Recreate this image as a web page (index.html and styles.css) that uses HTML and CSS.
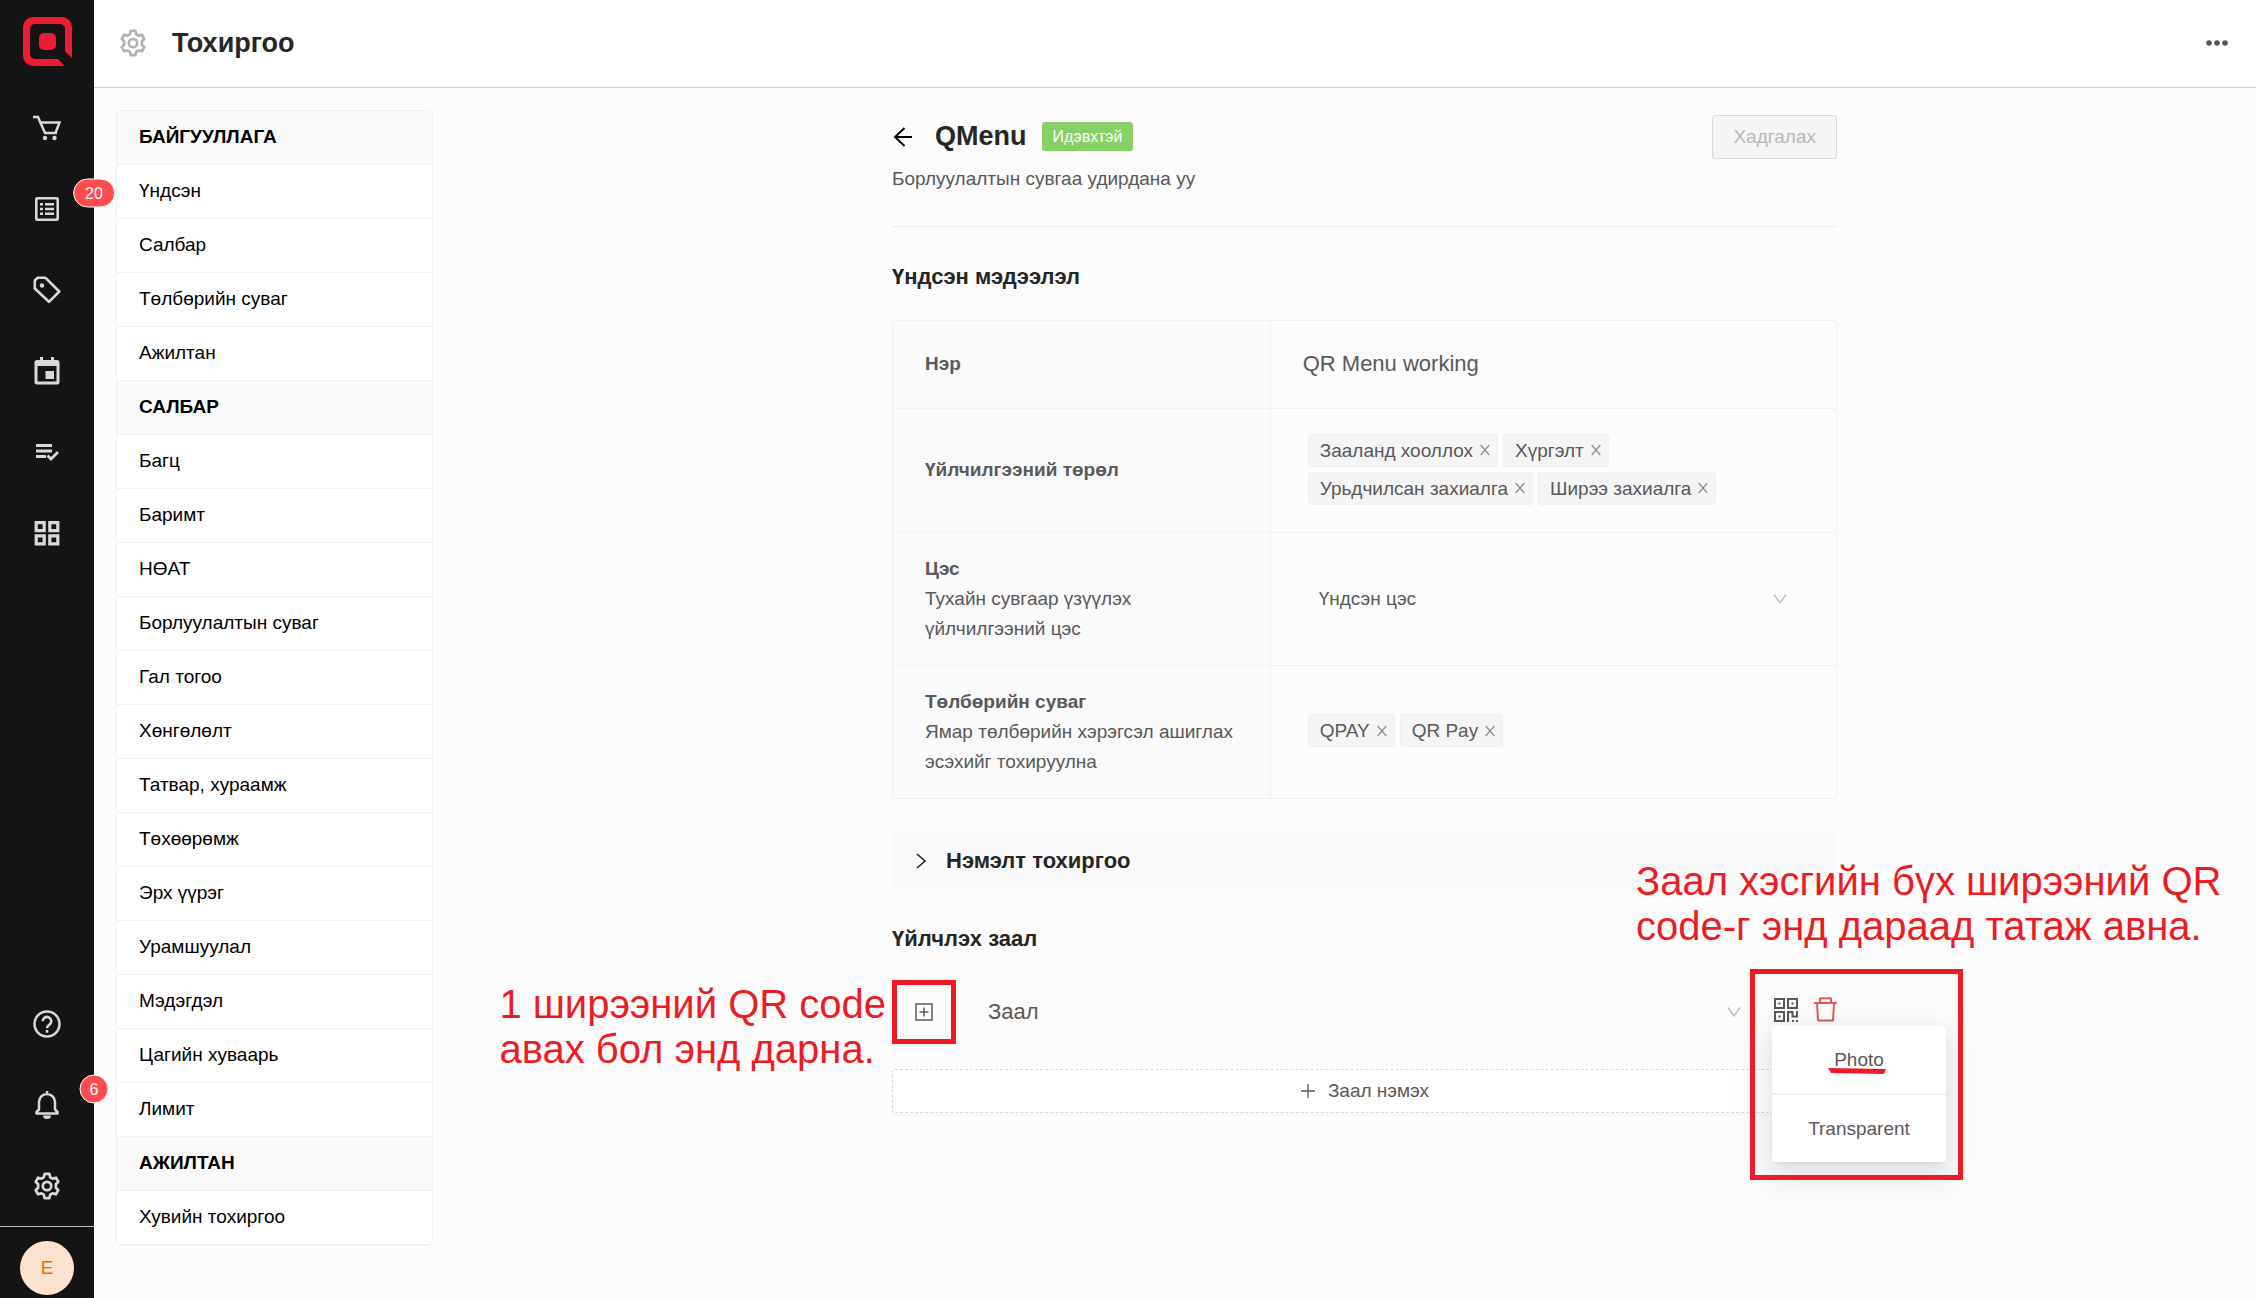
FILE: index.html
```html
<!DOCTYPE html>
<html lang="mn">
<head>
    <meta charset="UTF-8">
    <meta name="viewport" content="width=device-width, initial-scale=1.0">
    <title>Тохиргоо</title>
    <link rel="stylesheet" href="styles.css">
</head>
<body>
    <!-- shared icon shapes -->
    <svg class="defs" width="0" height="0">
        <symbol id="gear" viewBox="0 0 24 24">
            <path d="M10 1.6h4l.8 3 1.9 1.1 3-.8 2 3.500-2.100 2.100v3l2.100 2.100-2 3.500-3-.8-1.900 1.100-.8 3h-4l-.8-3-1.900-1.100-3 .8-2-3.500 2.100-2.100v-3L2.300 8.400l2-3.500 3 .8 1.900-1.100z" fill="none" stroke="currentColor" stroke-width="2.300" stroke-linejoin="round"/>
            <circle cx="12" cy="12" r="3.600" fill="none" stroke="currentColor" stroke-width="2.300"/>
        </symbol>
        <symbol id="close" viewBox="0 0 10 12">
            <path d="M.7 1l8.600 10M9.300 1L.7 11" fill="none" stroke="currentColor" stroke-width="1.200"/>
        </symbol>
        <symbol id="down" viewBox="0 0 14 12">
            <path d="M1 1.500l6 8.500 6-8.500" fill="none" stroke="currentColor" stroke-width="1.400"/>
        </symbol>
    </svg>

    <div class="layout">
        <nav class="sidebar">
            <a href="#" class="logo" aria-label="QMenu">
                <svg width="49" height="49" viewBox="0 0 49 49">
                    <path d="M10 0h29a10 10 0 0 1 10 10v31l-7-6.500V12a5 5 0 0 0-5-5H12a5 5 0 0 0-5 5v25a5 5 0 0 0 5 5h23l6.500 7H10A10 10 0 0 1 0 39V10A10 10 0 0 1 10 0z" fill="#ed1b34"/>
                    <rect x="16" y="16" width="17" height="17" rx="5" fill="#ed1b34"/>
                </svg>
            </a>
            <a href="#" class="nav-item" aria-label="Захиалга">
                <svg width="28" height="28" viewBox="0 0 28 28">
                    <path d="M0 3h5l7 16h12" fill="none" stroke="currentColor" stroke-width="2.500"/>
                    <path d="M6.500 8.500h20l-4 10.500" fill="none" stroke="currentColor" stroke-width="2.500"/>
                    <circle cx="12" cy="24" r="2.200" fill="currentColor"/>
                    <circle cx="21.500" cy="24" r="2.200" fill="currentColor"/>
                </svg>
            </a>
            <a href="#" class="nav-item" aria-label="Жагсаалт">
                <svg width="26" height="26" viewBox="0 0 26 26">
                    <rect x="2.300" y="2.300" width="21.400" height="21.400" rx="1" fill="none" stroke="currentColor" stroke-width="2.600"/>
                    <path d="M6 8.200h3M11 8.200h9M6 13h3M11 13h9M6 17.800h3M11 17.800h9" stroke="currentColor" stroke-width="2.600"/>
                </svg>
                <span class="badge">20</span>
            </a>
            <a href="#" class="nav-item" aria-label="Бараа">
                <svg width="28" height="28" viewBox="0 0 28 28">
                    <path d="M4.500 1.800h8L26.300 15.500 16 25.800 1.800 12.500v-8z" fill="none" stroke="currentColor" stroke-width="2.600" stroke-linejoin="round"/>
                    <circle cx="9" cy="9.500" r="2.200" fill="currentColor"/>
                </svg>
            </a>
            <a href="#" class="nav-item" aria-label="Календарь">
                <svg width="26" height="28" viewBox="0 0 26 28">
                    <path d="M3 3h20a2.500 2.500 0 0 1 2.500 2.500V25a2.500 2.500 0 0 1-2.500 2.500H3A2.500 2.500 0 0 1 .5 25V5.500A2.500 2.500 0 0 1 3 3zM3.500 9v15.500h19V9z" fill="currentColor" fill-rule="evenodd"/>
                    <path d="M6 0h3v4H6zM17 0h3v4h-3zM11.500 14h8.500v8h-8.500z" fill="currentColor"/>
                </svg>
            </a>
            <a href="#" class="nav-item" aria-label="Даалгавар">
                <svg width="24" height="18" viewBox="0 0 24 18">
                    <path d="M1 2.500h16M1 8h16M1 13.500h10" stroke="currentColor" stroke-width="2.800"/>
                    <path d="M12.500 12.500l3.500 3.500 7-7" fill="none" stroke="currentColor" stroke-width="2.800"/>
                </svg>
            </a>
            <a href="#" class="nav-item" aria-label="Цэс">
                <svg width="26" height="26" viewBox="0 0 26 26">
                    <path d="M2.200 2.700h8v8h-8zM15.800 2.700h8v8h-8zM2.200 15.800h8v8h-8zM15.800 15.800h8v8h-8z" fill="none" stroke="currentColor" stroke-width="3.200"/>
                </svg>
            </a>

            <div class="nav-bottom">
                <a href="#" class="nav-item" aria-label="Тусламж">
                    <svg width="28" height="28" viewBox="0 0 28 28">
                        <circle cx="14" cy="14" r="12.500" fill="none" stroke="currentColor" stroke-width="2.500"/>
                        <path d="M9.800 11.200a4.200 4.200 0 1 1 6.800 3.200c-1.600 1.300-2.600 1.900-2.600 3.800M14 20v2.800" fill="none" stroke="currentColor" stroke-width="2.500"/>
                    </svg>
                </a>
                <a href="#" class="nav-item" aria-label="Мэдэгдэл">
                    <svg width="26" height="28" viewBox="0 0 26 28">
                        <path d="M2.500 22.500h21v-1.500l-2.500-2.500V11a8 8 0 0 0-16 0v7.500L2.500 21zM13 3V0" fill="none" stroke="currentColor" stroke-width="2.500" stroke-linejoin="round"/>
                        <path d="M9 24.500h8a4 3.500 0 0 1-8 0z" fill="currentColor"/>
                    </svg>
                    <span class="badge">6</span>
                </a>
                <a href="#" class="nav-item" aria-label="Тохиргоо">
                    <svg width="28" height="28"><use href="#gear"/></svg>
                </a>
                <div class="user">
                    <button type="button" class="avatar">E</button>
                </div>
            </div>
        </nav>

        <div class="page">
            <header class="header">
                <svg class="header-icon" width="28" height="28"><use href="#gear"/></svg>
                <h1>Тохиргоо</h1>
                <button type="button" class="more" aria-label="Бусад">
                    <svg width="22" height="6" viewBox="0 0 22 6" fill="currentColor">
                        <circle cx="3" cy="3" r="2.800"/>
                        <circle cx="11" cy="3" r="2.800"/>
                        <circle cx="19" cy="3" r="2.800"/>
                    </svg>
                </button>
            </header>

            <div class="body">
                <aside class="menu">
                    <h2>БАЙГУУЛЛАГА</h2>
                    <a href="#">Үндсэн</a>
                    <a href="#">Салбар</a>
                    <a href="#">Төлбөрийн суваг</a>
                    <a href="#">Ажилтан</a>
                    <h2>САЛБАР</h2>
                    <a href="#">Багц</a>
                    <a href="#">Баримт</a>
                    <a href="#">НӨАТ</a>
                    <a href="#">Борлуулалтын суваг</a>
                    <a href="#">Гал тогоо</a>
                    <a href="#">Хөнгөлөлт</a>
                    <a href="#">Татвар, хураамж</a>
                    <a href="#">Төхөөрөмж</a>
                    <a href="#">Эрх үүрэг</a>
                    <a href="#">Урамшуулал</a>
                    <a href="#">Мэдэгдэл</a>
                    <a href="#">Цагийн хуваарь</a>
                    <a href="#">Лимит</a>
                    <h2>АЖИЛТАН</h2>
                    <a href="#">Хувийн тохиргоо</a>
                </aside>

                <main class="content">
                    <div class="detail">
                        <div class="detail-header">
                            <div class="detail-title">
                                <a href="#" class="back" aria-label="Буцах">
                                    <svg width="22" height="22" viewBox="0 0 22 22">
                                        <path d="M20 11H3M12.500 2L3 11l9.500 9" fill="none" stroke="currentColor" stroke-width="1.900"/>
                                    </svg>
                                </a>
                                <h2>QMenu</h2>
                                <span class="status">Идэвхтэй</span>
                            </div>
                            <button type="button" class="save" disabled>Хадгалах</button>
                        </div>
                        <p class="subtitle">Борлуулалтын сувгаа удирдана уу</p>

                        <h3>Үндсэн мэдээлэл</h3>
                        <div class="info">
                            <table>
                                <tr>
                                    <th><label for="name">Нэр</label></th>
                                    <td><input type="text" id="name" value="QR Menu working"></td>
                                </tr>
                                <tr>
                                    <th>Үйлчилгээний төрөл</th>
                                    <td>
                                        <div class="tags">
                                            <span class="tag">Зааланд хооллох <button type="button" aria-label="Устгах"><svg width="10" height="12"><use href="#close"/></svg></button></span>
                                            <span class="tag">Хүргэлт <button type="button" aria-label="Устгах"><svg width="10" height="12"><use href="#close"/></svg></button></span>
                                            <span class="tag">Урьдчилсан захиалга <button type="button" aria-label="Устгах"><svg width="10" height="12"><use href="#close"/></svg></button></span>
                                            <span class="tag">Ширээ захиалга <button type="button" aria-label="Устгах"><svg width="10" height="12"><use href="#close"/></svg></button></span>
                                        </div>
                                    </td>
                                </tr>
                                <tr>
                                    <th><label for="menu">Цэс</label><p>Тухайн сувгаар үзүүлэх үйлчилгээний цэс</p></th>
                                    <td>
                                        <div class="select-wrap menu-select">
                                            <select id="menu">
                                                <option>Үндсэн цэс</option>
                                            </select>
                                            <svg width="14" height="12"><use href="#down"/></svg>
                                        </div>
                                    </td>
                                </tr>
                                <tr>
                                    <th>Төлбөрийн суваг<p>Ямар төлбөрийн хэрэгсэл ашиглах эсэхийг тохируулна</p></th>
                                    <td>
                                        <div class="tags">
                                            <span class="tag">QPAY <button type="button" aria-label="Устгах"><svg width="10" height="12"><use href="#close"/></svg></button></span>
                                            <span class="tag">QR Pay <button type="button" aria-label="Устгах"><svg width="10" height="12"><use href="#close"/></svg></button></span>
                                        </div>
                                    </td>
                                </tr>
                            </table>
                        </div>

                        <button type="button" class="collapse">
                            <svg width="12" height="16" viewBox="0 0 12 16">
                                <path d="M2 1l8 7-8 7" fill="none" stroke="currentColor" stroke-width="1.600"/>
                            </svg>
                            Нэмэлт тохиргоо
                        </button>

                        <h3 class="hall-title">Үйлчлэх заал</h3>
                        <div class="hall">
                            <div class="expand">
                                <button type="button" aria-label="Нээх">
                                    <svg width="18" height="18" viewBox="0 0 18 18">
                                        <path d="M1 1h16v16H1zM4.500 9h9M9 4.500v9" fill="none" stroke="currentColor" stroke-width="1.500"/>
                                    </svg>
                                </button>
                                <p class="note note-left">1 ширээний QR code<br>авах бол энд дарна.</p>
                            </div>
                            <div class="select-wrap hall-select">
                                <select aria-label="Заал">
                                    <option>Заал</option>
                                </select>
                                <svg width="14" height="12"><use href="#down"/></svg>
                            </div>
                            <div class="actions">
                                <button type="button" class="qr" aria-label="QR code">
                                    <svg width="24" height="24" viewBox="0 0 24 24">
                                        <path d="M1 1h9v9H1zM14 1h9v9h-9zM1 14h9v9H1z" fill="none" stroke="currentColor" stroke-width="2"/>
                                        <path d="M4.500 4.500h2v2h-2zM17.500 4.500h2v2h-2zM4.500 17.500h2v2h-2zM18 22h2v2h-2zM22 22h2v2h-2z" fill="currentColor"/>
                                        <path d="M14 24V14h4.500v4.500H23V13" fill="none" stroke="currentColor" stroke-width="2"/>
                                    </svg>
                                </button>
                                <button type="button" class="delete" aria-label="Устгах">
                                    <svg width="23" height="25" viewBox="0 0 23 25">
                                        <path d="M0 6h23M6 6V1.300h11V6M3 6l1 17.500h15L20 6" fill="none" stroke="currentColor" stroke-width="2" stroke-linejoin="round"/>
                                    </svg>
                                </button>

                                <div class="qr-menu">
                                    <button type="button">Photo
                                        <svg class="underline" width="58" height="6" viewBox="0 0 58 6">
                                            <path d="M0 0l58 1-2 5-53-1z" fill="#ed1c24"/>
                                        </svg>
                                    </button>
                                    <button type="button">Transparent</button>
                                </div>
                                <div class="frame"></div>
                                <p class="note note-right">Заал хэсгийн бүх ширээний QR<br>code-г энд дараад татаж авна.</p>
                            </div>
                        </div>

                        <button type="button" class="add">
                            <svg width="16" height="16" viewBox="0 0 16 16">
                                <path d="M8 1v14M1 8h14" stroke="currentColor" stroke-width="1.300"/>
                            </svg>
                            Заал нэмэх
                        </button>
                    </div>
                </main>
            </div>
        </div>
    </div>
</body>
</html>
```

FILE: styles.css
```css
* {
    box-sizing: border-box;
}
body {
    margin: 0;
    font-family: "Liberation Sans", Arial, sans-serif;
    font-size: 19px;
    line-height: 30px;
    color: #595959;
    background-color: #fcfcfc;
}
h1, h2, h3, p {
    margin: 0;
}
a {
    color: inherit;
    text-decoration: none;
}
button, input, select {
    font: inherit;
    color: inherit;
    background: none;
    border: none;
    padding: 0;
    margin: 0;
}
button {
    cursor: pointer;
}
svg {
    display: block;
    flex-shrink: 0;
}
.defs {
    position: absolute;
}
.layout {
    display: flex;
    min-height: 100vh;
}

/* sidebar */
.sidebar {
    position: sticky;
    top: 0;
    z-index: 2;
    display: flex;
    flex-direction: column;
    width: 94px;
    height: 100vh;
    flex-shrink: 0;
    background-color: #141414;
    color: #d9d9d9;
}
.logo {
    display: flex;
    justify-content: center;
    padding: 17px 0 21px;
}
.nav-item {
    position: relative;
    display: flex;
    align-items: center;
    justify-content: center;
    height: 81px;
}
.badge {
    position: absolute;
    top: 25px;
    left: 94px;
    transform: translate(-50%, -50%);
    min-width: 29px;
    height: 29px;
    padding: 0 11px;
    border: 1px solid #fff;
    border-radius: 15px;
    background-color: #ff4d4f;
    color: #fff;
    font-size: 16px;
    line-height: 27px;
    text-align: center;
}
.nav-bottom {
    margin-top: auto;
}
.nav-bottom .badge {
    padding: 0 9px;
}
.user {
    display: flex;
    justify-content: center;
    padding: 14px 0 3px;
    border-top: 1px solid #bfbfbf;
}
.avatar {
    width: 54px;
    height: 54px;
    border-radius: 50%;
    background-color: #fde3cf;
    color: #f56a00;
}

/* header */
.page {
    flex: 1;
    min-width: 0;
}
.header {
    display: flex;
    align-items: center;
    height: 88px;
    padding: 0 28px 2px 25px;
    background-color: #fff;
    border-bottom: 1px solid #ccc;
}
.header-icon {
    color: #b3b3b3;
}
h1 {
    margin-left: 25px;
    font-size: 27px;
    color: #262626;
}
.more {
    margin-left: auto;
}
.body {
    display: flex;
    padding: 22px;
}

/* settings menu */
.menu {
    width: 317px;
    flex-shrink: 0;
    border: 1px solid #f0f0f0;
    border-radius: 5px;
    overflow: hidden;
    background-color: #fff;
}
.menu h2, .menu a {
    display: block;
    height: 54px;
    padding: 0 22px;
    border-bottom: 1px solid #f0f0f0;
    font-size: 19px;
    line-height: 51px;
    color: #000;
}
.menu h2 {
    background-color: #fafafa;
}

/* channel detail */
.content {
    flex: 1;
    padding-left: 62px;
}
.detail {
    max-width: 945px;
    margin: 0 auto;
}
.detail-header {
    display: flex;
    justify-content: space-between;
    padding-top: 5px;
}
.detail-title {
    display: flex;
    align-items: center;
    height: 43px;
}
.back {
    color: #000;
}
.detail-title h2 {
    margin: 0 15px 0 21px;
    font-size: 27px;
    line-height: 28px;
    padding-bottom: 2px;
    color: #262626;
}
.status {
    padding: 0 11px;
    border-radius: 3px;
    background-color: #87d068;
    color: #fff;
    font-size: 16px;
    line-height: 29px;
}
.save {
    height: 44px;
    padding: 0 20px;
    border: 1px solid #d9d9d9;
    border-radius: 3px;
    background-color: #f5f5f5;
    color: #b8b8b8;
    cursor: default;
}
.subtitle {
    padding: 5px 0 32px;
    border-bottom: 1px solid #ececec;
}
h3 {
    margin: 35px 0 28px;
    font-size: 22px;
    color: #262626;
}
.info {
    border: 1px solid #f0f0f0;
    border-radius: 3px;
}
.info table {
    width: 100%;
    border-collapse: collapse;
}
.info th, .info td {
    height: 87px;
    padding: 21px 32px;
    text-align: left;
    vertical-align: middle;
}
.info th {
    width: 40%;
    background-color: #fafafa;
    border-right: 1px solid #f0f0f0;
}
.info tr + tr {
    border-top: 1px solid #f0f0f0;
}
.info th p {
    font-weight: normal;
}
.info input {
    display: block;
    width: 100%;
    font-size: 22px;
}
.tags {
    display: flex;
    flex-wrap: wrap;
    gap: 5px;
    max-width: 440px;
    padding: 4px 5px 6px;
}
.tag {
    display: flex;
    align-items: center;
    gap: 7px;
    padding: 0 7px 0 11px;
    border: 1px solid #f0f0f0;
    border-radius: 3px;
    background-color: #f5f5f5;
    line-height: 31px;
}
.tag button {
    color: #8c8c8c;
}
.select-wrap {
    display: flex;
    align-items: center;
    color: #bfbfbf;
}
.select-wrap select {
    flex: 1;
    appearance: none;
    color: #595959;
}
.menu-select {
    padding: 0 17px 0 16px;
}

.collapse {
    display: flex;
    align-items: center;
    gap: 19px;
    width: 100%;
    height: 64px;
    margin-top: 30px;
    padding: 0 23px;
    background-color: #fafafa;
    color: #262626;
    font-size: 22px;
    font-weight: bold;
}
.hall-title {
    margin: 31px 0 25px;
}
.hall {
    display: flex;
    align-items: center;
    height: 66px;
}
.expand {
    position: relative;
    display: flex;
    justify-content: center;
    width: 64px;
    padding: 18px 0;
    border: 5px solid #ed1c24;
}
.hall-select {
    flex: 1;
    margin-left: 32px;
}
.hall-select select {
    font-size: 22px;
}
.actions {
    position: relative;
    display: flex;
    align-items: center;
    gap: 16px;
    margin-left: 33px;
    padding-bottom: 4px;
}
.delete {
    color: #eb5757;
}
.qr-menu {
    position: absolute;
    top: 29px;
    left: -2px;
    z-index: 1;
    width: 174px;
    border-radius: 3px;
    background-color: #fff;
    box-shadow: 0 4px 8px -5px rgba(0, 0, 0, 0.12), 0 8px 22px rgba(0, 0, 0, 0.08), 0 12px 38px 11px rgba(0, 0, 0, 0.05);
}
.qr-menu button {
    position: relative;
    display: block;
    width: 100%;
    height: 67px;
}
.qr-menu button + button {
    height: 69px;
    border-top: 2px solid #f0f0f0;
}
.underline {
    position: absolute;
    left: 56px;
    top: 42px;
}
.add {
    display: flex;
    align-items: center;
    justify-content: center;
    gap: 12px;
    width: 100%;
    height: 44px;
    margin-top: 24px;
    border: 1px dashed #d9d9d9;
    border-radius: 3px;
    background-color: #fff;
    box-shadow: 0 3px 0 rgba(0, 0, 0, 0.01);
}

/* red notes laid over the page */
.note {
    position: absolute;
    font-size: 40px;
    line-height: 45px;
    color: #ed1c24;
    white-space: nowrap;
}
.note-left {
    right: 65px;
    top: -3px;
}
.note-right {
    left: -138px;
    bottom: 77px;
}
.frame {
    position: absolute;
    top: -28px;
    left: -24px;
    z-index: 2;
    width: 213px;
    height: 211px;
    border: 5px solid #ed1c24;
    pointer-events: none;
}
```
